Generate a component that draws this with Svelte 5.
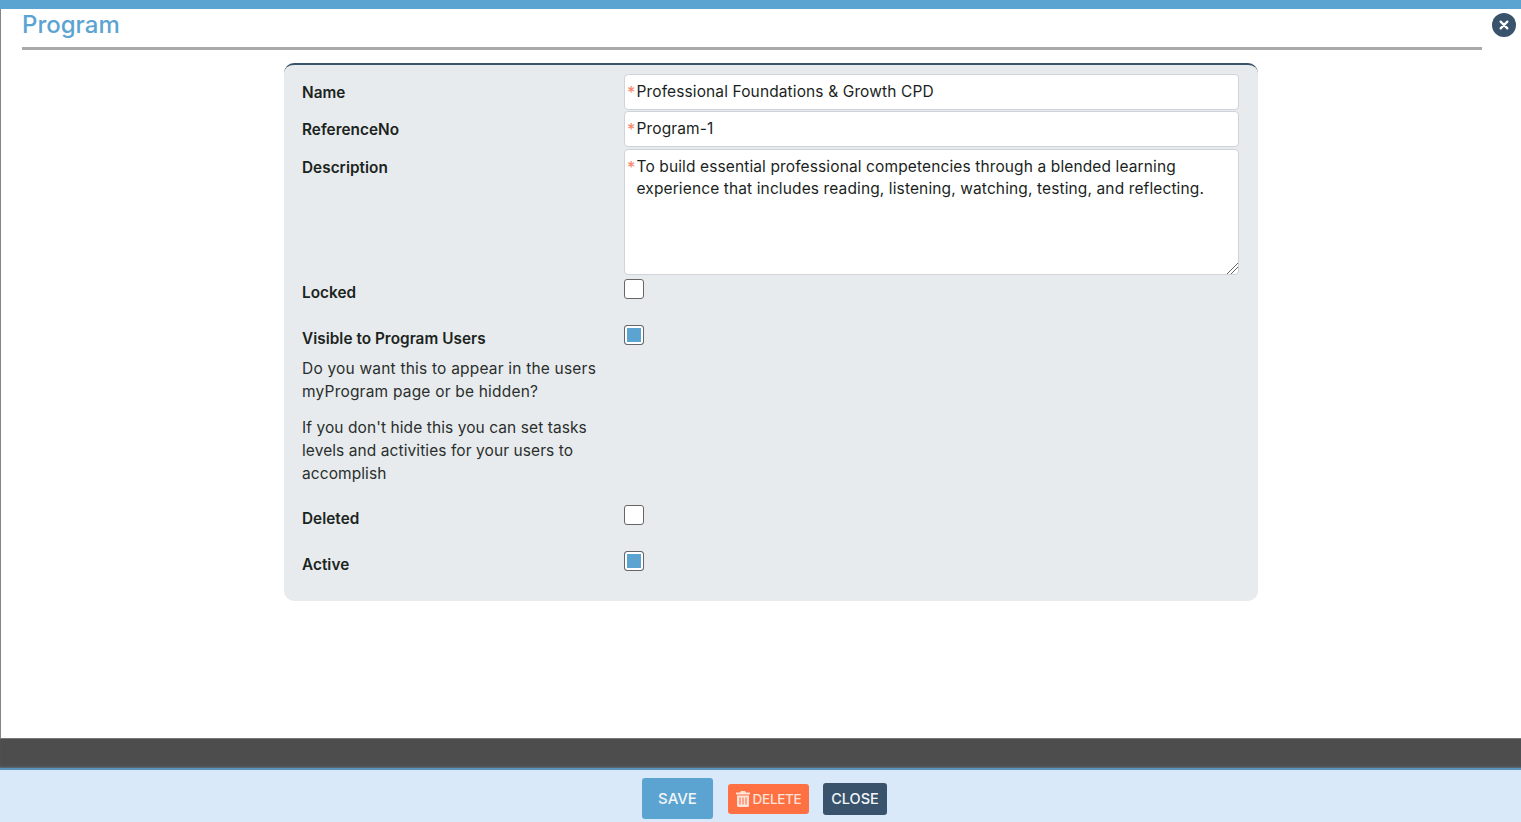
<script>
  let name = 'Professional Foundations & Growth CPD';
  let refNo = 'Program-1';
  let description = 'To build essential professional competencies through a blended learning\nexperience that includes reading, listening, watching, testing, and reflecting.';
</script>

<div class="page">
  <div class="topbar"></div>
  <main class="modal">
    <header class="head">
      <h1>Program</h1>
      <button class="x" aria-label="Close">
        <svg viewBox="0 0 12 12" width="10" height="10"><path d="M2 2 L10 10 M10 2 L2 10" stroke="#fff" stroke-width="2.8" stroke-linecap="round"/></svg>
      </button>
    </header>
    <section class="panel">
      <div class="row r-name">
        <span class="label">Name</span>
        <div class="field"><i>*</i><input bind:value={name} /></div>
      </div>
      <div class="row r-ref">
        <span class="label">ReferenceNo</span>
        <div class="field"><i>*</i><input bind:value={refNo} /></div>
      </div>
      <div class="row r-desc">
        <span class="label">Description</span>
        <div class="field"><i>*</i><textarea bind:value={description}></textarea></div>
      </div>
      <div class="row r-check">
        <span class="label">Locked</span>
        <input type="checkbox" />
      </div>
      <div class="row r-check r-visible">
        <div>
          <span class="label">Visible to Program Users</span>
          <p class="p1">Do you want this to appear in the users myProgram page or be hidden?</p>
          <p class="p2">If you don't hide this you can set tasks levels and activities for your users to accomplish</p>
        </div>
        <input type="checkbox" checked />
      </div>
      <div class="row r-check">
        <span class="label">Deleted</span>
        <input type="checkbox" />
      </div>
      <div class="row r-check">
        <span class="label">Active</span>
        <input type="checkbox" checked />
      </div>
    </section>
  </main>
  <div class="dark"></div>
  <footer class="foot">
    <button class="btn save">SAVE</button>
    <button class="btn del">
      <svg viewBox="0 0 14 16" width="14" height="16"><path fill="#fde3d8" d="M5 0h4l1 1.6h4v2H0v-2h4zM1 4.6h12V14.5A1.5 1.5 0 0 1 11.5 16h-9A1.5 1.5 0 0 1 1 14.5z"/><path stroke="#ff7043" stroke-width="1.1" d="M4 6.5v7M7 6.5v7M10 6.5v7"/></svg>
      DELETE
    </button>
    <button class="btn close">CLOSE</button>
  </footer>
</div>

<style>
  :global(body) { margin: 0; background: #fff; }
  .page {
    height: 822px;
    display: flex;
    flex-direction: column;
    overflow: hidden;
    font-family: "Inter", "Noto Sans", sans-serif;
    color: #1b1f1d;
  }
  .topbar { height: 9px; background: #5ba4d2; flex: none; }
  .modal {
    height: 730px;
    flex: none;
    box-sizing: border-box;
    border-left: 1px solid #858585;
    border-bottom: 1px solid #777;
    background: #fff;
    position: relative;
  }
  .head {
    margin: 0 39px 0 21px;
    height: 38px;
    border-bottom: 3px solid #a9a9a9;
  }
  h1 {
    margin: 0;
    padding-top: 1px;
    font-size: 24px;
    line-height: 30px;
    font-weight: 500;
    color: #5ba4d2;
  }
  .x {
    position: absolute;
    top: 4px;
    right: 5px;
    width: 24px;
    height: 24px;
    border: 0;
    border-radius: 50%;
    padding: 0;
    background: #38536b;
    display: flex;
    align-items: center;
    justify-content: center;
  }
  .panel {
    box-sizing: border-box;
    width: 974px;
    height: 538px;
    margin: 13px 0 0 283px;
    padding: 9px 19px 0 18px;
    border-top: 2px solid #38536b;
    border-radius: 10px;
    background: #e8ebee;
  }
  .row {
    display: grid;
    grid-template-columns: 322px 615px;
    align-items: start;
  }
  .r-name { height: 37px; }
  .r-ref { height: 38px; }
  .r-desc { height: 130px; }
  .r-check { height: 46px; }
  .r-visible { height: 180px; }
  .label {
    display: block;
    font-size: 15.3px;
    line-height: 22px;
    font-weight: 600;
    letter-spacing: 0.05px;
    padding-top: 8px;
    color: #1b2420;
  }
  .r-check .label { padding-top: 3px; }
  .r-desc .label { padding-top: 8px; }
  p {
    margin: 0;
    width: 300px;
    font-size: 15.5px;
    letter-spacing: 0.2px;
    line-height: 22.7px;
    color: #2a2f2d;
  }
  .p1 { margin-top: 8px; }
  .p2 { margin-top: 14px; letter-spacing: 0.08px; }
  .field { position: relative; }
  .field i {
    position: absolute;
    left: 3px;
    top: 9px;
    font-style: normal;
    font-size: 16px;
    font-weight: 500;
    line-height: 18px;
    color: #f58a70;
  }
  input:not([type]), textarea {
    display: block;
    box-sizing: border-box;
    width: 615px;
    border: 1px solid #ced4da;
    border-radius: 4px;
    background: #fff;
    font: inherit;
    font-size: 15.5px;
    letter-spacing: 0.12px;
    color: #1b1f1d;
    padding: 0 0 2px 11.5px;
    outline: none;
  }
  input:not([type]) { height: 36px; }
  textarea { height: 126px; padding-top: 6px; line-height: 22px; }
  textarea::-webkit-resizer {
    background: linear-gradient(135deg,
      transparent 12.9px, #666 12.9px, #666 14px, transparent 14px,
      transparent 15.8px, #666 15.8px, #666 16.9px, transparent 16.9px);
  }
  input[type="checkbox"] {
    appearance: none;
    box-sizing: border-box;
    width: 20px;
    height: 20px;
    margin: 0;
    border: 1px solid #666;
    border-radius: 3px;
    background: #fff;
  }
  input[type="checkbox"]:checked {
    background: #5ba4d2;
    box-shadow: inset 0 0 0 2px #fff;
  }
  .dark {
    height: 29px;
    flex: none;
    background: #4d4d4d;
    box-shadow: inset 0 -2px 2px -1px #5b6f80;
  }
  .foot {
    flex: 1;
    border-top: 2px solid #5a93bd;
    background: #d9e9f9;
    display: flex;
    align-items: center;
    justify-content: center;
    padding: 5px 0 0 8px;
  }
  .btn {
    border: 0;
    border-radius: 3px;
    font: inherit;
    font-weight: 500;
    color: #f3f6f8;
    padding: 0;
    display: flex;
    align-items: center;
    justify-content: center;
  }
  .save { width: 71px; height: 41px; background: #5ba4d2; font-size: 15px; }
  .del { width: 81px; height: 30px; margin-left: 15px; background: #ff7043; font-size: 13.5px; letter-spacing: -0.3px; gap: 3px; color: #fde3d8; }
  .close { width: 64px; height: 32px; margin-left: 14px; background: #38536b; font-size: 14.5px; }
</style>
